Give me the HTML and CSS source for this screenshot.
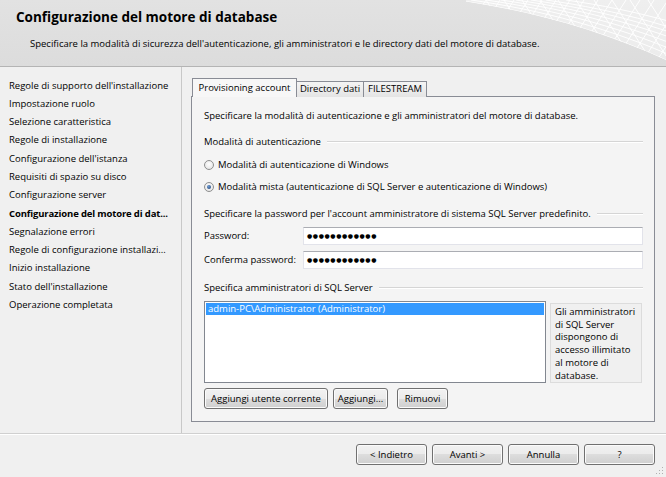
FILE: index.html
```html
<!DOCTYPE html>
<html lang="it">
<head>
<meta charset="utf-8">
<title>Configurazione del motore di database</title>
<link rel="stylesheet" href="styles.css">
</head>
<body>
<div class="window">
  <header class="header">
    <svg class="swirl" width="200" height="66" viewBox="0 0 200 66" aria-hidden="true">
      <defs>
        <clipPath id="bandclip"><path d="M-10,0 C60,10 130,28 200,60 L200,0 Z"/></clipPath>
      </defs>
      <path class="band" d="M-10,0 C60,10 130,28 200,60 L200,0 Z"/>
      <g class="lines" clip-path="url(#bandclip)">
        <path d="M-10,0 C60,10 130,28 200,60"/>
        <path d="M5,0 C75,10 145,28 215,60"/>
        <path d="M20,0 C90,10 160,28 230,60"/>
        <path d="M35,0 C105,10 175,28 245,60"/>
        <path d="M50,0 C120,10 190,28 260,60"/>
        <path d="M65,0 C135,10 205,28 275,60"/>
        <path d="M80,0 C150,10 220,28 290,60"/>
        <path d="M100,0 C170,10 240,28 310,60"/>
        <path d="M20,0 L-20,62"/><path d="M34,0 L-6,62"/><path d="M48,0 L8,62"/>
        <path d="M62,0 L22,62"/><path d="M76,0 L36,62"/><path d="M90,0 L50,62"/>
        <path d="M104,0 L64,62"/><path d="M118,0 L78,62"/><path d="M132,0 L92,62"/>
        <path d="M146,0 L106,62"/><path d="M160,0 L120,62"/><path d="M174,0 L134,62"/>
        <path d="M188,0 L148,62"/><path d="M202,0 L162,62"/><path d="M216,0 L176,62"/>
        <path d="M230,0 L190,62"/><path d="M244,0 L204,62"/>
        <path d="M20,0 L60,62"/><path d="M38,0 L78,62"/><path d="M56,0 L96,62"/>
        <path d="M74,0 L114,62"/><path d="M92,0 L132,62"/><path d="M110,0 L150,62"/>
        <path d="M128,0 L168,62"/><path d="M146,0 L186,62"/><path d="M164,0 L204,62"/>
        <path d="M182,0 L222,62"/>
      </g>
    </svg>
    <h1 class="title">Configurazione del motore di database</h1>
    <p class="subtitle">Specificare la modalità di sicurezza dell'autenticazione, gli amministratori e le directory dati del motore di database.</p>
  </header>

  <div class="main">
    <nav class="nav">
      <div class="nav-item">Regole di supporto dell'installazione</div>
      <div class="nav-item">Impostazione ruolo</div>
      <div class="nav-item">Selezione caratteristica</div>
      <div class="nav-item">Regole di installazione</div>
      <div class="nav-item">Configurazione dell'istanza</div>
      <div class="nav-item">Requisiti di spazio su disco</div>
      <div class="nav-item">Configurazione server</div>
      <div class="nav-item current">Configurazione del motore di dat...</div>
      <div class="nav-item">Segnalazione errori</div>
      <div class="nav-item">Regole di configurazione installazi...</div>
      <div class="nav-item">Inizio installazione</div>
      <div class="nav-item">Stato dell'installazione</div>
      <div class="nav-item">Operazione completata</div>
    </nav>

    <section class="content">
      <div class="tabs">
        <div class="tab active tab-prov">Provisioning account</div>
        <div class="tab tab-dir">Directory dati</div>
        <div class="tab tab-fs">FILESTREAM</div>
      </div>
      <div class="panel">
        <p class="intro">Specificare la modalità di autenticazione e gli amministratori del motore di database.</p>

        <div class="group-title g1">Modalità di autenticazione</div>
        <div class="radio r1"><span class="radio-dot"></span>Modalità di autenticazione di Windows</div>
        <div class="radio r2"><span class="radio-dot checked"></span>Modalità mista (autenticazione di SQL Server e autenticazione di Windows)</div>

        <div class="group-title g2">Specificare la password per l'account amministratore di sistema SQL Server predefinito.</div>
        <div class="field-row f1">
          <span class="field-label">Password:</span>
          <div class="input"><span class="dots">●●●●●●●●●●●●</span></div>
        </div>
        <div class="field-row f2">
          <span class="field-label">Conferma password:</span>
          <div class="input"><span class="dots">●●●●●●●●●●●●</span></div>
        </div>

        <div class="group-title g3">Specifica amministratori di SQL Server</div>
        <div class="admins">
          <div class="listbox">
            <div class="list-item selected">admin-PC\Administrator (Administrator)</div>
          </div>
          <div class="info">Gli amministratori<br>di SQL Server<br>dispongono di<br>accesso illimitato<br>al motore di<br>database.</div>
        </div>
        <div class="btn-row">
          <button class="btn btn-current">Aggiungi utente corrente</button>
          <button class="btn btn-add">Aggiungi...</button>
          <button class="btn btn-remove">Rimuovi</button>
        </div>
      </div>
    </section>
  </div>

  <footer class="footer">
    <button class="btn nav-btn">&lt; Indietro</button>
    <button class="btn nav-btn">Avanti &gt;</button>
    <button class="btn nav-btn">Annulla</button>
    <button class="btn nav-btn">?</button>
    <svg class="grip" width="8" height="8" viewBox="0 0 8 8" aria-hidden="true">
      <rect x="6" y="0" width="1" height="1"/><rect x="3" y="3" width="1" height="1"/><rect x="6" y="3" width="1" height="1"/>
      <rect x="0" y="6" width="1" height="1"/><rect x="3" y="6" width="1" height="1"/><rect x="6" y="6" width="1" height="1"/>
    </svg>
  </footer>
</div>
</body>
</html>
```

FILE: styles.css
```css
* { box-sizing: border-box; }

html, body {
  margin: 0;
  padding: 0;
}

body {
  background: #f0f0f0;
  font-family: "Open Sans", "Noto Sans", "Liberation Sans", sans-serif;
  font-size: 9.5px;
  color: #000;
}

.window {
  width: 666px;
  height: 477px;
  display: flex;
  flex-direction: column;
  overflow: hidden;
  position: relative;
}

/* ---------- header ---------- */
.header {
  flex: none;
  height: 67px;
  position: relative;
  background: linear-gradient(#e2e2e2, #dcdcdc);
  border-bottom: 1px solid #b4b4b4;
}

.swirl {
  position: absolute;
  top: 0;
  right: 0;
}

.swirl .band {
  fill: rgba(255, 255, 255, 0.45);
}

.swirl .lines path {
  fill: none;
  stroke: #ffffff;
  stroke-width: 0.9;
}

.title {
  position: relative;
  margin: 0;
  padding: 9px 0 0 16px;
  font-size: 13.5px;
  line-height: 16px;
  font-weight: 700;
}

.subtitle {
  position: relative;
  margin: 12px 0 0 0;
  padding-left: 30px;
  line-height: 14px;
}

/* ---------- main ---------- */
.main {
  flex: 1;
  display: flex;
  min-height: 0;
}

.nav {
  flex: none;
  width: 182px;
  border-right: 1px solid #c8c8c8;
  padding: 9.5px 0 0 9px;
}

.nav-item {
  line-height: 18.3px;
  white-space: nowrap;
}

.nav-item.current {
  font-weight: 700;
  letter-spacing: -0.15px;
}

.content {
  flex: 1;
  padding: 11px 11px 0 9px;
}

/* ---------- tabs ---------- */
.tabs {
  display: flex;
  align-items: flex-end;
  height: 19px;
  padding-left: 1px;
  margin-bottom: -1px;
  position: relative;
  z-index: 1;
}

.tab {
  height: 16px;
  line-height: 14px;
  text-align: center;
  border: 1px solid #898c95;
  border-bottom: none;
  background: linear-gradient(#f4f4f4, #e4e4e4);
  margin-left: -1px;
  white-space: nowrap;
}

.tab.active {
  height: 19px;
  line-height: 17px;
  background: #f7f7f7;
  margin-left: 0;
  z-index: 2;
}

.tab-prov { width: 105px; }
.tab-dir { width: 68px; }
.tab-fs { width: 64px; }

.panel {
  border: 1px solid #898c95;
  background: #f4f4f4;
  padding: 0 11px 12px 12px;
}

.intro {
  margin: 12px 0 0 0;
  line-height: 14px;
}

.group-title {
  display: flex;
  align-items: center;
  line-height: 14px;
  white-space: nowrap;
}

.group-title::after {
  content: "";
  flex: 1;
  margin-left: 6px;
  border-top: 1px solid #d5d5d5;
  border-bottom: 1px solid #ffffff;
}

.g1 { margin-top: 11.5px; }
.g2 { margin-top: 13px; }
.g3 { margin-top: 12px; }

.radio {
  display: flex;
  align-items: center;
  height: 14px;
}

.r1 { margin-top: 9px; }
.r2 { margin-top: 8px; }

.radio-dot {
  width: 10px;
  height: 10px;
  border-radius: 50%;
  border: 1px solid #8e8f8f;
  background: radial-gradient(circle at 50% 40%, #ffffff 0%, #e8e8e8 70%, #d4d4d4 100%);
  margin-right: 4px;
  flex: none;
  display: flex;
  align-items: center;
  justify-content: center;
}

.radio-dot.checked::before {
  content: "";
  width: 4px;
  height: 4px;
  border-radius: 50%;
  background: radial-gradient(circle at 40% 35%, #6d9bd1, #1c3a6e);
}

.field-row {
  display: flex;
  align-items: center;
  height: 18px;
}

.f1 { margin-top: 6px; }
.f2 { margin-top: 6px; }

.field-label {
  width: 99px;
  flex: none;
}

.input {
  flex: 1;
  height: 18px;
  background: #fff;
  border: 1px solid #e2e3ea;
  border-top-color: #abadb3;
  padding-left: 3px;
  display: flex;
  align-items: center;
}

.dots {
  font-family: "DejaVu Sans", sans-serif;
  font-size: 6px;
  letter-spacing: 0.6px;
  line-height: 1;
}

.admins {
  display: flex;
  align-items: flex-start;
  margin-top: 6.5px;
}

.listbox {
  width: 342px;
  height: 82px;
  background: #fff;
  border: 1px solid #828790;
  padding: 1px;
}

.list-item {
  line-height: 12px;
  padding-left: 2px;
  white-space: nowrap;
}

.list-item.selected {
  background: #3399ff;
  color: #fff;
}

.info {
  width: 92px;
  height: 80px;
  margin-top: 2px;
  margin-left: 4px;
  border: 1px solid #dcdcdc;
  background: #f0f0f0;
  padding: 2px 0 0 4px;
  line-height: 12.7px;
}

.btn-row {
  display: flex;
  margin-top: 5px;
}

.btn {
  height: 21px;
  padding: 0;
  font-family: inherit;
  font-size: inherit;
  color: #000;
  border: 1px solid #707070;
  border-radius: 3px;
  background: linear-gradient(#f2f2f2 0%, #ebebeb 50%, #dddddd 50%, #cfcfcf 100%);
  box-shadow: inset 0 0 0 1px #fbfbfb;
  text-align: center;
  white-space: nowrap;
}

.btn-current { width: 124px; }
.btn-add { width: 55px; margin-left: 5px; }
.btn-remove { width: 51px; margin-left: 9px; }

/* ---------- footer ---------- */
.footer {
  flex: none;
  height: 44px;
  border-top: 1px solid #d0d0d0;
  box-shadow: inset 0 1px 0 #ffffff;
  display: flex;
  justify-content: flex-end;
  align-items: flex-start;
  gap: 5px;
  padding: 10px 11px 0 0;
  position: relative;
}

.nav-btn {
  width: 71px;
}

.grip {
  position: absolute;
  right: 2px;
  bottom: 2px;
  fill: #b0b0b0;
}
```
